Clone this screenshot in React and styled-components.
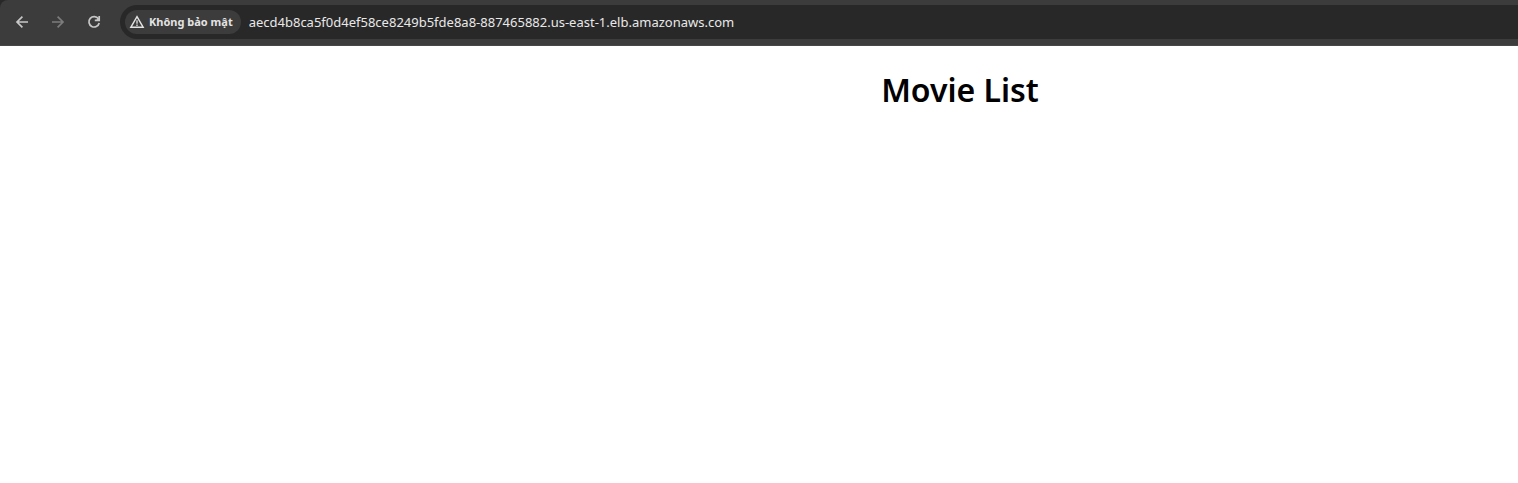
import React from "react";
import styled, { createGlobalStyle } from "styled-components";

const GlobalStyle = createGlobalStyle`
  *, *::before, *::after { box-sizing: border-box; }
  body {
    margin: 0;
    background: #fff;
    overflow-x: hidden;
    font-family: "Noto Sans", "Open Sans", sans-serif;
  }
`;

const Chrome = styled.header`
  background: #282828;
`;

const Toolbar = styled.nav`
  display: flex;
  align-items: center;
  height: 46px;
  padding: 5px 0 6px 8px;
  background: #3c3c3c;
  border-bottom: 1px solid #474747;
  border-top-left-radius: 8px;
`;

const NavButtons = styled.div`
  display: flex;
  gap: 8px;
  margin-right: 12px;
`;

const NavButton = styled.button`
  display: grid;
  place-items: center;
  width: 28px;
  height: 28px;
  padding: 0;
  border: 0;
  border-radius: 50%;
  background: transparent;
  color: #c7c7c7;

  &:disabled { color: #7c7c7c; }
`;

const AddressBar = styled.div`
  display: flex;
  flex: 1;
  align-items: center;
  gap: 8px;
  min-width: 0;
  height: 34px;
  padding-left: 5px;
  background: #282828;
  border-radius: 17px 0 0 17px;
`;

const SecurityChip = styled.button`
  display: flex;
  flex: none;
  align-items: center;
  gap: 4px;
  height: 24px;
  padding: 0 8px 0 4px;
  border: 0;
  border-radius: 12px;
  background: #3c3c3c;
  color: #e3e3e3;
  font: 700 11px/24px "Noto Sans", sans-serif;
  white-space: nowrap;
`;

const UrlInput = styled.input`
  flex: 1;
  min-width: 0;
  height: 34px;
  padding: 0;
  border: 0;
  outline: 0;
  background: transparent;
  color: #e8e8e8;
  font: 400 13px/20px "Noto Sans", sans-serif;
`;

const Page = styled.main`
  padding: 24px 0 0 402px;
`;

const Title = styled.h1`
  margin: 0;
  color: #000;
  font: 600 32px/40px "Noto Sans", sans-serif;
  text-align: center;
`;

const Icon = ({ size = 16, children }) => (
  <svg width={size} height={size} viewBox="0 0 16 16" fill="none" stroke="currentColor" strokeWidth="1.7" aria-hidden="true">
    {children}
  </svg>
);

export default function App() {
  return (
    <>
      <GlobalStyle />
      <Chrome>
        <Toolbar>
          <NavButtons>
            <NavButton type="button" aria-label="Back">
              <Icon><path d="M14 8H3.4M8.4 2.6 3 8l5.4 5.4" /></Icon>
            </NavButton>
            <NavButton type="button" aria-label="Forward" disabled>
              <Icon><path d="M2 8h10.6M7.6 2.6 13 8l-5.4 5.4" /></Icon>
            </NavButton>
            <NavButton type="button" aria-label="Reload">
              <Icon>
                <path d="M12.4 4.8A5.2 5.2 0 1 0 13.2 9" />
                <path d="M13.2 2v4.4H8.8" />
                <path d="M12.8 3.4v2.6h-2.6Z" fill="currentColor" stroke="none" />
              </Icon>
            </NavButton>
          </NavButtons>
          <AddressBar>
            <SecurityChip type="button">
              <Icon>
                <path d="M8 2.6 14.2 13.3H1.8Z" strokeWidth="1.4" />
                <path d="M8 6.3v3.5M8 10.6v1.4" strokeWidth="1.3" />
              </Icon>
              Không bảo mật
            </SecurityChip>
            <UrlInput
              type="text"
              aria-label="Address"
              spellCheck={false}
              defaultValue="aecd4b8ca5f0d4ef58ce8249b5fde8a8-887465882.us-east-1.elb.amazonaws.com"
            />
          </AddressBar>
        </Toolbar>
      </Chrome>
      <Page>
        <Title>Movie List</Title>
      </Page>
    </>
  );
}
